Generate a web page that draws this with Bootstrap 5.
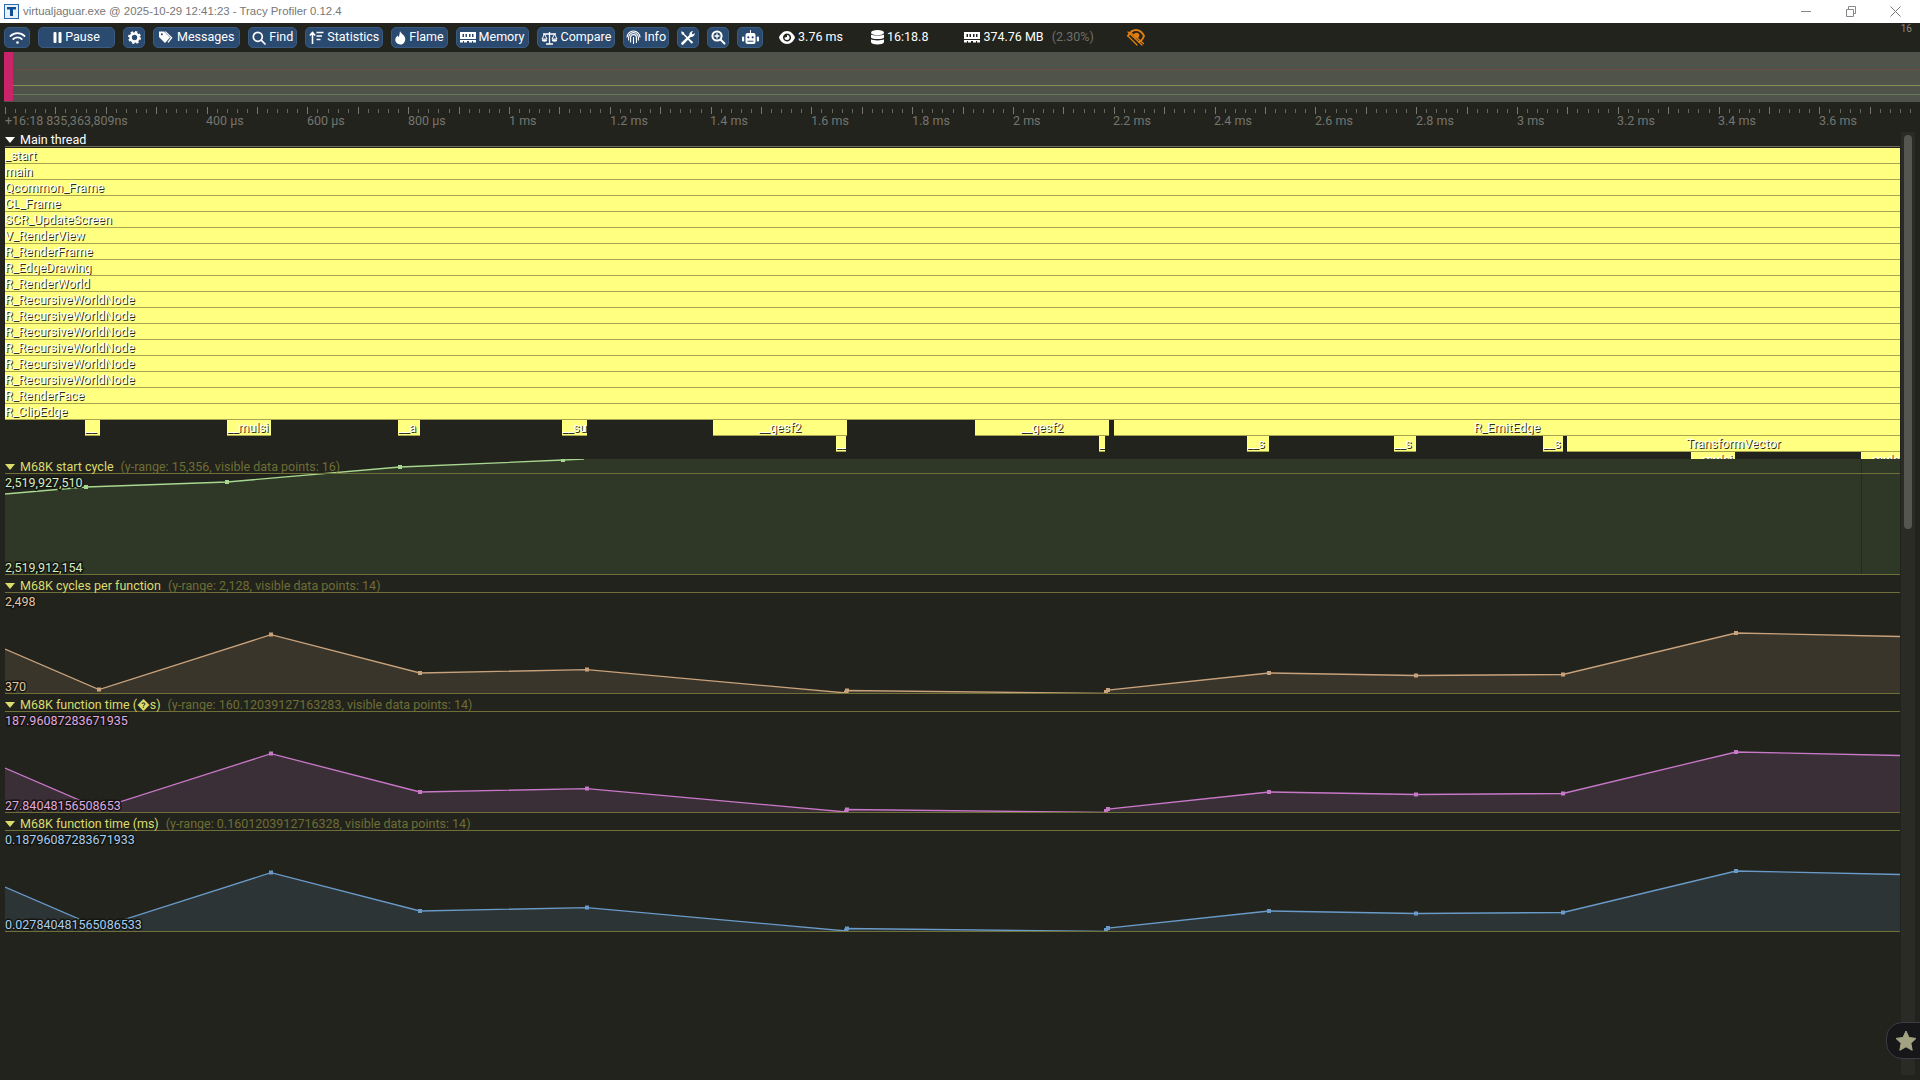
<!DOCTYPE html>
<html lang="en">
<head>
  <meta charset="UTF-8">
  <title>virtualjaguar.exe - Tracy Profiler 0.12.4</title>
  <link href="https://cdn.jsdelivr.net/npm/bootstrap@5.3.0/dist/css/bootstrap.min.css" rel="stylesheet">
  <style>
    body {
      background: #22231d;
      font-family: Roboto, "Liberation Sans", sans-serif;
      font-size: 12.5px;
      line-height: 1;
      height: 1080px;
      overflow: hidden;
      color: #fff;
    }
    .win-title { height: 23px; background: #fff; color: #777; font: 11.4px/23px "Liberation Sans", sans-serif; }
    .win-title svg { display: block; }
    .win-ctrls { padding-right: 2px; }
    .win-ctrl { width: 45px; }
    .tool-strip { height: 29px; padding: 4px 0 0 4px; }
    .tool-btn {
      height: 21px;
      padding: 0 3px;
      background: #2b4a70;
      border: 1px solid #3a5a80;
      border-radius: 5px;
      color: #fff;
      font-size: 12.5px;
      line-height: 1;
      gap: 3px;
      --bs-btn-hover-bg: #2b4a70;
    }
    .tool-btn svg { flex: none; }
    .btn-wifi { width: 26px; }
    .btn-pause { width: 77px; }
    .btn-msgs { padding: 0 5px; }
    .btn-info { padding: 0 2px; }
    .btn-icon { width: 22px; padding: 0; }
    .btn-robot { width: 26px; padding: 0; }
    .stat-item { gap: 3px; height: 21px; }
    .stat-view { margin-left: 8px; }
    .stat-db { margin-left: 20px; }
    .stat-mem { margin-left: 28px; }
    .stat-warn { margin-left: 25px; }
    .stat-dim { color: #6f6f69; margin-left: 5px; }
    .frame-count { color: #8a8a84; font-size: 10px; position: absolute; right: 8px; top: 24px; }
    .overview { height: 50px; margin-left: 4px; background: #50534a; position: relative; }
    .overview i { position: absolute; left: 0; right: 0; height: 1px; }
    .overview .ov-pink { left: 0; right: auto; top: 0; bottom: 1px; height: auto; width: 9px; background: #c9246a; }
    .ruler { height: 30px; position: relative; margin-left: 5px; color: #75756f; }
    .ruler-ticks {
      position: absolute; left: 0; right: 0; top: 5px; height: 7px;
      background:
        repeating-linear-gradient(90deg, #77776f 0 1px, transparent 1px 50.4px) 0 0 / 100% 7px no-repeat,
        repeating-linear-gradient(90deg, #66665f 0 1px, transparent 1px 10.08px) 0 2px / 100% 4px no-repeat;
    }
    .ruler span { position: absolute; top: 13px; }
    .view-main { width: 1900px; padding-left: 5px; }
    .thread-head { height: 15px; border-bottom: 1px solid #6c6c58; margin-bottom: 1px; gap: 5px; padding-top: 2px; }
    .tri { width: 0; height: 0; border: 5px solid transparent; border-top: 6px solid currentColor; border-bottom: 0; flex: none; }
    .zones { height: 311px; overflow: hidden; }
    .zone-row { height: 16px; position: relative; }
    .zone {
      height: 16px;
      background: #ffff80;
      border-bottom: 1px solid #a5a550;
      color: #fff;
      text-shadow: 1px 1px 0 #2c2c18;
      line-height: 15px;
      white-space: nowrap;
      overflow: hidden;
    }
    .zone-at { position: absolute; top: 0; }
    .zone-mid { text-align: center; }
    .plot-head { height: 18px; border-bottom: 1px solid #6f7038; gap: 5px; color: #dcdc6e; white-space: nowrap; padding-top: 5px; }
    .plot-head em { font-style: normal; color: #6e6e34; margin-left: 2px; }
    .plot-chart { height: 101px; border-bottom: 1px solid #6f7038; }
    .plot-chart svg, .plot-first svg { display: block; }
    .plot-first { height: 116px; position: relative; border-bottom: 1px solid #6f7038; }
    .plot-first .plot-head { position: absolute; left: 0; right: 0; top: 0; height: 15px; padding: 2px 0 0; }
    .plot-label { font: 12.5px Roboto, sans-serif; stroke: #15150f; stroke-width: 3px; paint-order: stroke; }
    .c-green { color: #a8d890; } .c-tan { color: #c8a27c; } .c-pink { color: #c878c8; } .c-blue { color: #6a9ac8; }
    .plot-fill { fill: #2f3727; }
    .l-green { fill: #d4ecc8; } .l-tan { fill: #e0c4a4; } .l-pink { fill: #e0a8e0; } .l-blue { fill: #a8ccf0; }
    .scroll-track { width: 14px; margin: 132px 0 5px 1px; background: #2a2b26; padding: 3px 3px 0; height: 943px; }
    .scroll-thumb { height: 394px; background: #55564f; border-radius: 4px; }
    .fav-btn {
      position: absolute; right: -20px; top: 1022px; width: 54px; height: 37px;
      background: #17171a; border: 1px solid #3c3c44; border-radius: 16px;
      display: flex; align-items: center; padding-left: 8px;
    }
  </style>
</head>
<body>
  <svg class="d-none">
    <defs>
      <g id="fn-shape">
        <polygon fill="currentColor" fill-opacity=".15" points="5,56 99,96.5 271,41.7 420,80 587,76.7 846,100 847,97.5 1106,100.5 1108,97 1269,80 1416,82.5 1563,81.5 1736,40 1900,43.5 1900,100 5,100"/>
        <polyline fill="none" stroke="currentColor" stroke-width="1.300" points="5,56 99,96.5 271,41.7 420,80 587,76.7 846,100 847,97.5 1106,100.5 1108,97 1269,80 1416,82.5 1563,81.5 1736,40 1900,43.5"/>
        <g fill="currentColor">
          <rect x="97" y="94.500" width="4" height="4"/><rect x="269" y="39.500" width="4" height="4"/><rect x="418" y="78" width="4" height="4"/>
          <rect x="585" y="74.500" width="4" height="4"/><rect x="844" y="97.500" width="4" height="4"/><rect x="845" y="95.500" width="4" height="4"/>
          <rect x="1104" y="97" width="4" height="4"/><rect x="1106" y="95" width="4" height="4"/><rect x="1267" y="78" width="4" height="4"/>
          <rect x="1414" y="80.500" width="4" height="4"/><rect x="1561" y="79.500" width="4" height="4"/><rect x="1734" y="38" width="4" height="4"/>
        </g>
      </g>
    </defs>
  </svg>

  <div class="win-title d-flex align-items-center">
    <svg class="ms-1 me-1" width="15" height="15" viewBox="0 0 15 15"><rect x=".5" y=".5" width="14" height="14" fill="#e8f0f8" stroke="#2a6ab0"/><path d="M3 3h9v2.500H9V12H6V5.500H3z" fill="#0f4f96"/></svg>
    <span>virtualjaguar.exe @ 2025-10-29 12:41:23 - Tracy Profiler 0.12.4</span>
    <div class="win-ctrls ms-auto d-flex">
      <div class="win-ctrl d-flex justify-content-center"><svg width="10" height="10" viewBox="0 0 10 10"><path d="M0 5.500h10" stroke="#888"/></svg></div>
      <div class="win-ctrl d-flex justify-content-center"><svg width="10" height="11" viewBox="0 0 10 11"><path d="M.5 3.500h7v7h-7zM2.500 3.500v-3h7v7h-2" fill="none" stroke="#888"/></svg></div>
      <div class="win-ctrl d-flex justify-content-center"><svg width="11" height="11" viewBox="0 0 11 11"><path d="M.5.500l10 10M10.500.500l-10 10" stroke="#777"/></svg></div>
    </div>
  </div>

  <div class="tool-strip d-flex align-items-start gap-2">
    <button class="btn tool-btn btn-wifi d-flex align-items-center justify-content-center">
      <svg width="17" height="14" viewBox="0 0 17 14" fill="none" stroke="#fff" stroke-width="1.800" stroke-linecap="round"><path d="M1.500 5a10 10 0 0 1 14 0M4.300 8a6 6 0 0 1 8.400 0"/><circle cx="8.500" cy="11.500" r="1.300" fill="#fff" stroke="none"/></svg>
    </button>
    <button class="btn tool-btn btn-pause d-flex align-items-center justify-content-center">
      <svg width="9" height="11" viewBox="0 0 9 11" fill="#fff"><rect x=".5" width="3" height="11" rx="1"/><rect x="5.500" width="3" height="11" rx="1"/></svg>Pause
    </button>
    <button class="btn tool-btn btn-icon d-flex align-items-center justify-content-center">
      <svg width="13" height="13" viewBox="0 0 13 13"><circle cx="6.500" cy="6.500" r="4" fill="none" stroke="#fff" stroke-width="2.600"/><circle cx="6.500" cy="6.500" r="5.500" fill="none" stroke="#fff" stroke-width="2" stroke-dasharray="2.300 2"/></svg>
    </button>
    <button class="btn tool-btn btn-msgs d-flex align-items-center">
      <svg width="15" height="13" viewBox="0 0 15 13" fill="#fff"><path fill-rule="evenodd" d="M0 .5h5l6 6-5 5.500-6-6zM2.800 2.300a1 1 0 1 0 .1 0z"/><path d="M7 .5l6.500 6.300-4 5-1-.8 3.200-4.200L5.500.5z"/></svg>Messages
    </button>
    <button class="btn tool-btn d-flex align-items-center">
      <svg width="14" height="14" viewBox="0 0 14 14" fill="none" stroke="#fff" stroke-width="1.700" stroke-linecap="round"><circle cx="5.800" cy="5.800" r="4.500"/><path d="M9.200 9.200l3.800 3.800"/></svg>Find
    </button>
    <button class="btn tool-btn d-flex align-items-center">
      <svg width="15" height="13" viewBox="0 0 15 13" fill="none" stroke="#fff" stroke-width="1.600"><path d="M3.500 13V2M.8 4.500l2.700-3 2.700 3M7.500 1.500h7M7.500 5h5.500M7.500 8.500h4"/></svg>Statistics
    </button>
    <button class="btn tool-btn d-flex align-items-center">
      <svg width="11" height="14" viewBox="0 0 11 14" fill="#fff"><path d="M5 0c.5 2 4 3.500 5 6.500 1 3.700-1.500 7-4.700 7S-.5 10.500.5 7.500c.5-1.300 1.300-2 1.800-3 .5.800 1 1.300 1.500 1.500C4.500 4 4.700 2 5 0z"/></svg>Flame
    </button>
    <button class="btn tool-btn d-flex align-items-center">
      <svg width="16" height="11" viewBox="0 0 16 11" fill="#fff"><path fill-rule="evenodd" d="M0 0h16v7H0zM2.500 2v3h1.500V2zM5.500 2v3H7V2zM9 2v3h1.500V2zM12 2v3h1.500V2z"/><path d="M0 8h16v2.500h-3V9h-1v1.500H9V9H7v1.500H4V9H3v1.500H0z"/></svg>Memory
    </button>
    <button class="btn tool-btn d-flex align-items-center">
      <svg width="17" height="14" viewBox="0 0 17 14" fill="none" stroke="#fff" stroke-width="1.300"><path d="M8.500 1v11.500M5 13h7M2 3h13"/><path d="M3.500 3L1 8h5zM13.500 3L11 8h5z" stroke-width="1"/><path d="M.8 8.500a2.700 2.200 0 0 0 5.400 0zM10.800 8.500a2.700 2.200 0 0 0 5.400 0z" fill="#fff" stroke="none"/></svg>Compare
    </button>
    <button class="btn tool-btn btn-info d-flex align-items-center">
      <svg width="15" height="15" viewBox="0 0 15 15" fill="none" stroke="#fff" stroke-width="1.100"><path d="M1 7.500a6.500 6.500 0 0 1 13 0M2.600 10.500V7.500a4.900 4.900 0 0 1 9.800 0v3M4.600 12.500v-5a2.900 2.900 0 0 1 5.800 0v5.500M7.500 14V7"/></svg>Info
    </button>
    <button class="btn tool-btn btn-icon d-flex align-items-center justify-content-center">
      <svg width="16" height="16" viewBox="0 0 16 16" fill="#fff"><path d="M1.200 1.200l2.600 1 .6 1.700 8.800 8.300-1.500 1.500-8.300-8.800-1.700-.6z"/><path d="M1.500 12.500L9.300 5.200C9 3 10.800.8 13.300 1.200L11.600 3l1.200 1.500 1.900-1.500c.4 2.400-1.800 4.300-4 3.900l-7.300 7.700c-1.200 1-3 -.7-1.900-2.100z"/></svg>
    </button>
    <button class="btn tool-btn btn-icon d-flex align-items-center justify-content-center">
      <svg width="15" height="15" viewBox="0 0 15 15" fill="none" stroke="#fff" stroke-linecap="round"><circle cx="6" cy="6" r="4.600" stroke-width="2"/><path d="M9.500 9.500l4 4" stroke-width="2"/><path d="M4 6h4M6 4v4" stroke-width="1.300"/></svg>
    </button>
    <button class="btn tool-btn btn-robot d-flex align-items-center justify-content-center">
      <svg width="17" height="15" viewBox="0 0 17 15" fill="#fff"><path d="M8 0h1v3H8z"/><rect x="3.500" y="3" width="10" height="11" rx="2"/><rect y="6.500" width="2.200" height="5" rx="1"/><rect x="14.800" y="6.500" width="2.200" height="5" rx="1"/><circle cx="6.300" cy="7.300" r="1.100" fill="#2b4a70"/><circle cx="10.700" cy="7.300" r="1.100" fill="#2b4a70"/><path d="M5.500 10.700h6v1h-6z" fill="#2b4a70"/></svg>
    </button>
    <div class="stat-item stat-view d-flex align-items-center">
      <svg width="16" height="13" viewBox="0 0 16 13"><path fill="#fff" fill-rule="evenodd" d="M8 0c4 0 7 3.500 8 6.500-1 3-4 6.500-8 6.500S1 9.500 0 6.500C1 3.500 4 0 8 0zm0 2.500a4 4 0 1 0 .1 0z"/><path fill="#fff" d="M8 4a2.500 2.500 0 1 1-2.500 2.500l2.500-.4z"/></svg>
      3.76 ms
    </div>
    <div class="stat-item stat-db d-flex align-items-center">
      <svg width="13" height="15" viewBox="0 0 13 15" fill="#fff"><ellipse cx="6.500" cy="2.700" rx="6.500" ry="2.700"/><path d="M0 4.500c1.500 1.500 11.500 1.500 13 0v3c-1 2-12 2-13 0zM0 9.300c1.500 1.500 11.500 1.500 13 0v3c-1 3-12 3-13 0z"/></svg>
      16:18.8
    </div>
    <div class="stat-item stat-mem d-flex align-items-center">
      <svg width="16" height="11" viewBox="0 0 16 11" fill="#fff"><path fill-rule="evenodd" d="M0 0h16v7H0zM2.500 2v3h1.500V2zM5.500 2v3H7V2zM9 2v3h1.500V2zM12 2v3h1.500V2z"/><path d="M0 8h16v2.500h-3V9h-1v1.500H9V9H7v1.500H4V9H3v1.500H0z"/></svg>
      374.76 MB <span class="stat-dim">(2.30%)</span>
    </div>
    <div class="stat-item stat-warn d-flex align-items-center">
      <svg width="18" height="17" viewBox="0 0 18 17" fill="none" stroke="#e07e10" stroke-linecap="round"><path d="M1 7c2-4 5-6 8-6s6 2 8 6c-1 3-3 5-5 6" stroke-width="1.800"/><circle cx="9.500" cy="6.500" r="2.800" fill="#e07e10" stroke="none"/><path d="M1 3l14 13M1 7l9 9M3.500 3.500l13 11" stroke-width="1.300"/></svg>
    </div>
  </div>
  <div class="frame-count">16</div>

  <div class="overview">
    <i style="top: 17px; background: #6b4f45"></i>
    <i style="top: 33px; background: #8a8c55"></i>
    <i style="top: 42px; background: #5f7a55"></i>
    <i class="ov-pink"></i>
  </div>

  <div class="ruler">
    <div class="ruler-ticks"></div>
    <span style="left: 0">+16:18 835,363,809ns</span>
    <span style="left: 201px">400 µs</span>
    <span style="left: 302px">600 µs</span>
    <span style="left: 403px">800 µs</span>
    <span style="left: 504px">1 ms</span>
    <span style="left: 605px">1.2 ms</span>
    <span style="left: 705px">1.4 ms</span>
    <span style="left: 806px">1.6 ms</span>
    <span style="left: 907px">1.8 ms</span>
    <span style="left: 1008px">2 ms</span>
    <span style="left: 1108px">2.2 ms</span>
    <span style="left: 1209px">2.4 ms</span>
    <span style="left: 1310px">2.6 ms</span>
    <span style="left: 1411px">2.8 ms</span>
    <span style="left: 1512px">3 ms</span>
    <span style="left: 1612px">3.2 ms</span>
    <span style="left: 1713px">3.4 ms</span>
    <span style="left: 1814px">3.6 ms</span>
  </div>

  <div class="position-absolute top-0 start-0 d-flex">
    <div class="view-main" style="margin-top: 132px">
      <div class="thread-head d-flex align-items-center"><span class="tri"></span>Main thread</div>
      <div class="zones">
        <div class="zone">_start</div>
        <div class="zone">main</div>
        <div class="zone">Qcommon_Frame</div>
        <div class="zone">CL_Frame</div>
        <div class="zone">SCR_UpdateScreen</div>
        <div class="zone">V_RenderView</div>
        <div class="zone">R_RenderFrame</div>
        <div class="zone">R_EdgeDrawing</div>
        <div class="zone">R_RenderWorld</div>
        <div class="zone">R_RecursiveWorldNode</div>
        <div class="zone">R_RecursiveWorldNode</div>
        <div class="zone">R_RecursiveWorldNode</div>
        <div class="zone">R_RecursiveWorldNode</div>
        <div class="zone">R_RecursiveWorldNode</div>
        <div class="zone">R_RecursiveWorldNode</div>
        <div class="zone">R_RenderFace</div>
        <div class="zone">R_ClipEdge</div>
        <div class="zone-row">
          <div class="zone zone-at" style="left: 80px; width: 15px">__</div>
          <div class="zone zone-at" style="left: 222px; width: 44px">__mulsi</div>
          <div class="zone zone-at" style="left: 393px; width: 22px">__a</div>
          <div class="zone zone-at" style="left: 557px; width: 25px">__su</div>
          <div class="zone zone-at zone-mid" style="left: 708px; width: 134px">__gesf2</div>
          <div class="zone zone-at zone-mid" style="left: 970px; width: 134px">__gesf2</div>
          <div class="zone zone-at zone-mid" style="left: 1109px; width: 786px">R_EmitEdge</div>
        </div>
        <div class="zone-row">
          <div class="zone zone-at" style="left: 831px; width: 10px">__</div>
          <div class="zone zone-at" style="left: 1094px; width: 6px">_</div>
          <div class="zone zone-at" style="left: 1242px; width: 22px">__s</div>
          <div class="zone zone-at" style="left: 1389px; width: 22px">__s</div>
          <div class="zone zone-at" style="left: 1538px; width: 20px">__s</div>
          <div class="zone zone-at zone-mid" style="left: 1562px; width: 333px">TransformVector</div>
        </div>
        <div class="zone-row">
          <div class="zone zone-at" style="left: 1686px; width: 44px">__mulsi</div>
          <div class="zone zone-at" style="left: 1856px; width: 39px">__muls</div>
        </div>
      </div>

      <div class="plot-first c-green">
        <svg width="1895" height="115" viewBox="5 0 1895 115">
          <polygon class="plot-fill" points="5,35 86,28 227,23 400,8 563,1 584,0 1900,0 1900,115 5,115"/>
          <polyline fill="none" stroke="currentColor" stroke-width="1.300" points="5,35 86,28 227,23 400,8 563,1 584,0"/>
          <g fill="currentColor">
            <rect x="84" y="26" width="4" height="4"/><rect x="225" y="21" width="4" height="4"/><rect x="398" y="6" width="4" height="4"/><rect x="561" y="0" width="4" height="3"/>
          </g>
          <path d="M1861.500 0v115" stroke="#262b20"/>
          <text class="plot-label l-green" x="5" y="27.500">2,519,927,510</text>
          <text class="plot-label l-green" x="5" y="113">2,519,912,154</text>
        </svg>
        <div class="plot-head d-flex align-items-center"><span class="tri"></span>M68K start cycle <em>(y-range: 15,356, visible data points: 16)</em></div>
      </div>

      <div class="plot-head d-flex align-items-center"><span class="tri"></span>M68K cycles per function <em>(y-range: 2,128, visible data points: 14)</em></div>
      <div class="plot-chart c-tan">
        <svg width="1895" height="100" viewBox="5 0 1895 100">
          <use href="#fn-shape"/>
          <text class="plot-label l-tan" x="5" y="13">2,498</text>
          <text class="plot-label l-tan" x="5" y="98">370</text>
        </svg>
      </div>

      <div class="plot-head d-flex align-items-center"><span class="tri"></span>M68K function time (�s) <em>(y-range: 160.12039127163283, visible data points: 14)</em></div>
      <div class="plot-chart c-pink">
        <svg width="1895" height="100" viewBox="5 0 1895 100">
          <use href="#fn-shape"/>
          <text class="plot-label l-pink" x="5" y="13">187.96087283671935</text>
          <text class="plot-label l-pink" x="5" y="98">27.84048156508653</text>
        </svg>
      </div>

      <div class="plot-head d-flex align-items-center"><span class="tri"></span>M68K function time (ms) <em>(y-range: 0.1601203912716328, visible data points: 14)</em></div>
      <div class="plot-chart c-blue">
        <svg width="1895" height="100" viewBox="5 0 1895 100">
          <use href="#fn-shape"/>
          <text class="plot-label l-blue" x="5" y="13">0.18796087283671933</text>
          <text class="plot-label l-blue" x="5" y="98">0.027840481565086533</text>
        </svg>
      </div>
    </div>
    <div class="scroll-track"><div class="scroll-thumb"></div></div>
  </div>

  <div class="fav-btn">
    <svg width="22" height="21" viewBox="0 0 22 21"><path d="M11 1l3 6.500 7 .9-5.100 4.900 1.300 7L11 16.800 4.800 20.300l1.300-7L1 8.400l7-.9z" fill="#a3a383" stroke="#a3a383" stroke-linejoin="round"/></svg>
  </div>
</body>
</html>
